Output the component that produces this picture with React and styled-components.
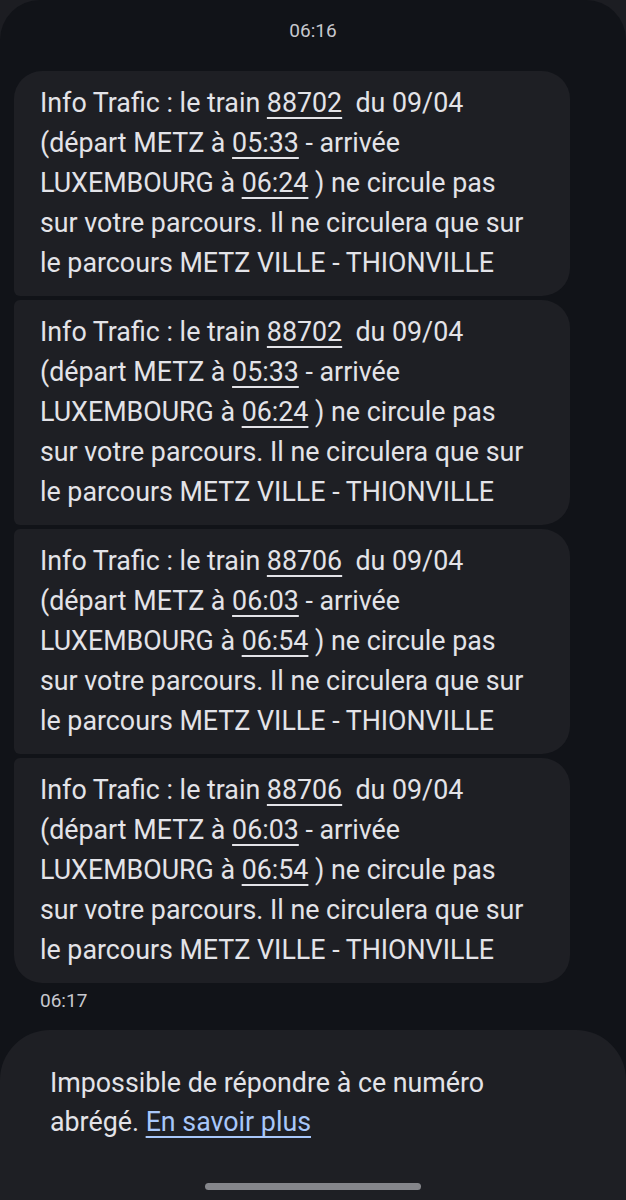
import React from 'react'
import styled, { createGlobalStyle } from 'styled-components'

const GlobalStyle = createGlobalStyle`
	html, body {
		margin: 0;
		padding: 0;
		background: #1c1d22;
	}
	body {
		font-family: Roboto, "Noto Sans", sans-serif;
		color: #e3e3e8;
	}
`

const Screen = styled.div`
	width: 626px;
	height: 1200px;
	background: #111318;
	border-radius: 40px 40px 0 0;
	display: flex;
	flex-direction: column;
	overflow: hidden;
`

const Stamp = styled.div`
	font-size: 19px;
	line-height: 24px;
	color: #c7c8ce;
	text-align: ${p => (p.$center ? 'center' : 'left')};
	padding: ${p => p.$pad};
`

const Thread = styled.div`
	display: flex;
	flex-direction: column;
	gap: 4px;
	padding: 0 56px 0 14px;
`

const Bubble = styled.div`
	background: #1e1f24;
	border-radius: ${p => (p.$first ? '28px' : '6px')} 28px 28px ${p => (p.$last ? '28px' : '6px')};
	padding: 12px 18px 13px 26px;
	font-size: 26.8px;
	line-height: 40px;
	white-space: pre;
`

const Num = styled.span`
	text-decoration: underline;
	text-decoration-thickness: 2px;
	text-underline-offset: 5px;
`

const Footer = styled.div`
	margin-top: auto;
	background: #1e1f24;
	border-radius: 50px 50px 0 0;
	height: 170px;
	display: flex;
	flex-direction: column;
	align-items: center;
	padding: 34px 0 0;
	box-sizing: border-box;
`

const Notice = styled.div`
	align-self: stretch;
	padding: 0 50px;
	font-size: 26.8px;
	line-height: 39px;
`

const Link = styled.a`
	color: #a8c7fa;
	text-decoration: underline;
	text-decoration-thickness: 2px;
	text-underline-offset: 5px;
`

const HomeBar = styled.div`
	width: 216px;
	height: 7px;
	border-radius: 4px;
	background: #85868b;
	margin-top: auto;
	margin-bottom: 10px;
`

const messages = [
	{ train: '88702', dep: '05:33', arr: '06:24' },
	{ train: '88702', dep: '05:33', arr: '06:24' },
	{ train: '88706', dep: '06:03', arr: '06:54' },
	{ train: '88706', dep: '06:03', arr: '06:54' }
]

const Message = ({ train, dep, arr, first, last }) => (
	<Bubble $first={first} $last={last}>
		{'Info Trafic : le train '}<Num>{train}</Num>{'  du 09/04\n'}
		{'(départ METZ à '}<Num>{dep}</Num>{' - arrivée\n'}
		{'LUXEMBOURG à '}<Num>{arr}</Num>{' ) ne circule pas\n'}
		{'sur votre parcours. Il ne circulera que sur\n'}
		{'le parcours METZ VILLE - THIONVILLE'}
	</Bubble>
)

const App = () => (
	<>
		<GlobalStyle />
		<Screen>
			<Stamp $center $pad='19px 0 28px'>06:16</Stamp>
			<Thread>
				{messages.map((m, i) => (
					<Message key={i} {...m} first={i === 0} last={i === messages.length - 1} />
				))}
			</Thread>
			<Stamp $pad='6px 40px 0'>06:17</Stamp>
			<Footer>
				<Notice>
					Impossible de répondre à ce numéro<br />
					abrégé. <Link href='#'>En savoir plus</Link>
				</Notice>
				<HomeBar />
			</Footer>
		</Screen>
	</>
)

export default App
